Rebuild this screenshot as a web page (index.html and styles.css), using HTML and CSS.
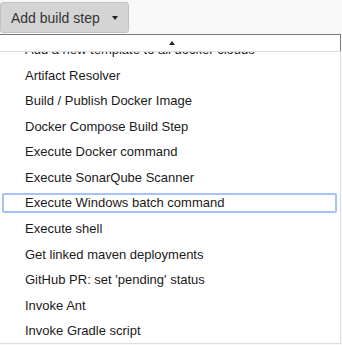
FILE: index.html
```html
<!DOCTYPE html>
<html lang="en">
<head>
    <meta charset="UTF-8">
    <meta name="viewport" content="width=device-width, initial-scale=1.0">
    <title>Add build step</title>
    <link rel="stylesheet" href="styles.css">
</head>
<body>
    <div class="toolbar">
        <button class="build-btn" type="button">Add build step <span class="caret"></span></button>
    </div>

    <!-- dropdown menu, scrolled down a little -->
    <div class="menu">
        <div class="scroll-up"><span class="arrow-up"></span></div>
        <div class="list">
            <ul class="items">
                <li><span class="label">Add a new template to all docker clouds</span></li>
                <li><span class="label">Artifact Resolver</span></li>
                <li><span class="label">Build / Publish Docker Image</span></li>
                <li><span class="label">Docker Compose Build Step</span></li>
                <li><span class="label">Execute Docker command</span></li>
                <li><span class="label">Execute SonarQube Scanner</span></li>
                <li class="selected"><span class="label">Execute Windows batch command</span></li>
                <li><span class="label">Execute shell</span></li>
                <li><span class="label">Get linked maven deployments</span></li>
                <li><span class="label">GitHub PR: set 'pending' status</span></li>
                <li><span class="label">Invoke Ant</span></li>
                <li><span class="label">Invoke Gradle script</span></li>
            </ul>
        </div>
    </div>
</body>
</html>
```

FILE: styles.css
```css
* {
    box-sizing: border-box;
}
body {
    margin: 0;
    background-color: #f8f8f8;
    font-family: "Liberation Sans", Arial, sans-serif;
    color: #333;
}
.toolbar {
    padding-top: 2px;
}
.build-btn {
    display: flex;
    align-items: center;
    height: 31px;
    width: 129px;
    margin: 0;
    padding: 0 0 0 10px;
    font-family: "Liberation Sans", Arial, sans-serif;
    font-size: 14px;
    color: #333;
    background-color: #d4d4d4;
    border: 1px solid #c2c2c2;
    border-radius: 3px;
}
.caret {
    width: 0;
    height: 0;
    margin-left: 12px;
    margin-top: 1px;
    border-left: 3.5px solid transparent;
    border-right: 3.5px solid transparent;
    border-top: 4px solid #222;
}
.menu {
    margin-top: 1px;
    width: 341px;
    background-color: #fff;
}
.scroll-up {
    display: flex;
    justify-content: center;
    align-items: center;
    height: 17px;
    padding-left: 3px;
    border-top: 1px solid #7a7a7a;
    border-right: 1px solid #7a7a7a;
}
.arrow-up {
    width: 0;
    height: 0;
    border-left: 3.5px solid transparent;
    border-right: 3.5px solid transparent;
    border-bottom: 4px solid #222;
}
.list {
    height: 293px;
    overflow: hidden;
    border-top: 1px solid #dcdcdc;
    border-right: 1px solid #dcdcdc;
    border-bottom: 1px solid #dcdcdc;
}
.items {
    list-style: none;
    margin: -15.4px 0 0 0;
    padding: 0;
}
.items li {
    height: 25.6px;
    padding: 2.5px 3px 2.5px 2px;
    font-size: 13px;
    color: #1a1a1a;
}
.label {
    display: flex;
    align-items: center;
    height: 100%;
    padding-left: 21px;
    border: 2px solid transparent;
    border-radius: 2px;
    white-space: nowrap;
}
.selected .label {
    border-color: #a4c2f4;
}
```
